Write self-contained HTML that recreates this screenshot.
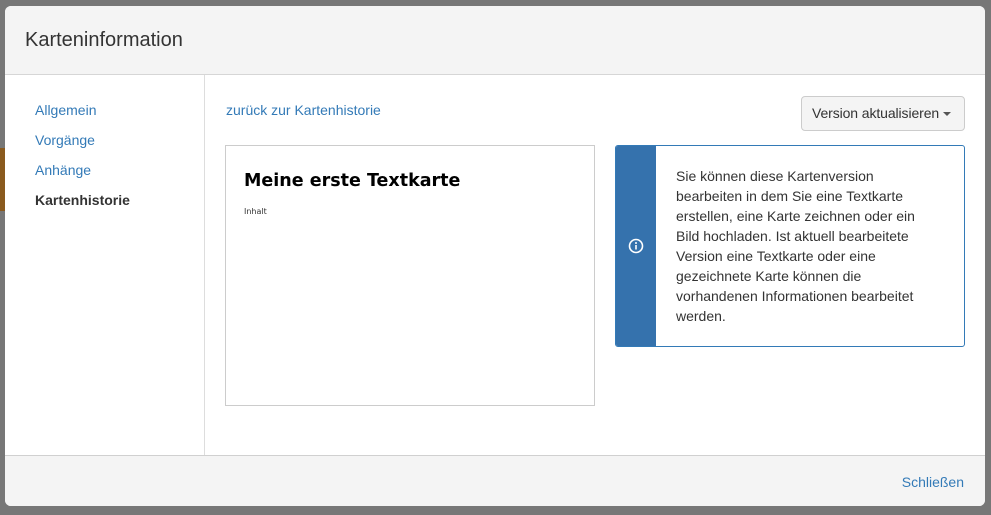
<!DOCTYPE html>
<html><head><meta charset="utf-8"><style>
*{box-sizing:border-box;margin:0;padding:0}
body{width:991px;height:515px;background:#777;font-family:"Liberation Sans",Arial,sans-serif;position:relative;overflow:hidden}
.orange{position:absolute;left:0;top:148px;width:6px;height:63px;background:#8a5a1e}
.modal{position:absolute;left:5px;top:6px;width:980px;height:500px;background:#fff;border-radius:6px;overflow:hidden}
.hdr{height:69px;background:#f4f4f4;border-bottom:1px solid #d6d6d6;padding:23px 20px;font-size:20px;color:#333}
.side{position:absolute;left:0;top:69px;width:200px;height:380px;border-right:1px solid #ddd;padding-top:25px}
.side div{padding-left:30px;font-size:14px;color:#337ab7;height:30px;line-height:20px}
.side .act{color:#333;font-weight:bold}
.ftr{position:absolute;left:0;top:449px;width:980px;height:51px;background:#f4f4f4;border-top:1px solid #d0d0d0}
.ftr span{position:absolute;right:21px;top:18px;color:#337ab7;font-size:14px}
.back{position:absolute;left:221px;top:96px;color:#337ab7;font-size:14px}
.btn{position:absolute;left:796px;top:90px;width:164px;height:35px;border:1px solid #ccc;border-radius:4px;background:#f4f4f4;font-size:14px;color:#333;padding:0 0 0 10px;line-height:33px;white-space:nowrap;letter-spacing:-0.1px}
.caret{display:inline-block;border-left:4px solid transparent;border-right:4px solid transparent;border-top:4px solid #555;vertical-align:middle;margin-left:4px}
.card{position:absolute;left:220px;top:139px;width:370px;height:261px;border:1px solid #ccc}
.card h1{font-family:"DejaVu Sans",sans-serif;font-size:17.5px;font-weight:bold;color:#000;position:absolute;left:18px;top:25px}
.card p{font-family:"DejaVu Sans",sans-serif;font-size:8px;color:#333;position:absolute;left:18px;top:61px}
.info{position:absolute;left:610px;top:139px;width:350px;height:202px;border:1px solid #337ab7;border-radius:3px;overflow:hidden}
.info .bar{position:absolute;left:0;top:0;width:40px;height:100%;background:#3572ad}
.info .txt{position:absolute;left:60px;top:20px;width:260px;font-size:14px;line-height:20px;color:#333}
.info svg{position:absolute;left:12px;top:92px}
</style></head><body>
<div class="orange"></div>
<div class="modal">
<div class="hdr">Karteninformation</div>
<div class="side"><div>Allgemein</div><div>Vorgänge</div><div>Anhänge</div><div class="act">Kartenhistorie</div></div>
<div class="back">zurück zur Kartenhistorie</div>
<div class="btn">Version aktualisieren<span class="caret"></span></div>
<div class="card"><h1>Meine erste Textkarte</h1><p>Inhalt</p></div>
<div class="info"><div class="bar"></div>
<svg width="16" height="16" viewBox="0 0 16 16"><circle cx="8" cy="8" r="6.5" fill="none" stroke="#fff" stroke-width="1.6"/><rect x="7.2" y="7" width="1.6" height="4.5" fill="#fff"/><circle cx="8" cy="5" r="1" fill="#fff"/></svg>
<div class="txt">Sie können diese Kartenversion bearbeiten in dem Sie eine Textkarte erstellen, eine Karte zeichnen oder ein Bild hochladen. Ist aktuell bearbeitete Version eine Textkarte oder eine gezeichnete Karte können die vorhandenen Informationen bearbeitet werden.</div></div>
<div class="ftr"><span>Schließen</span></div>
</div>
</body></html>
